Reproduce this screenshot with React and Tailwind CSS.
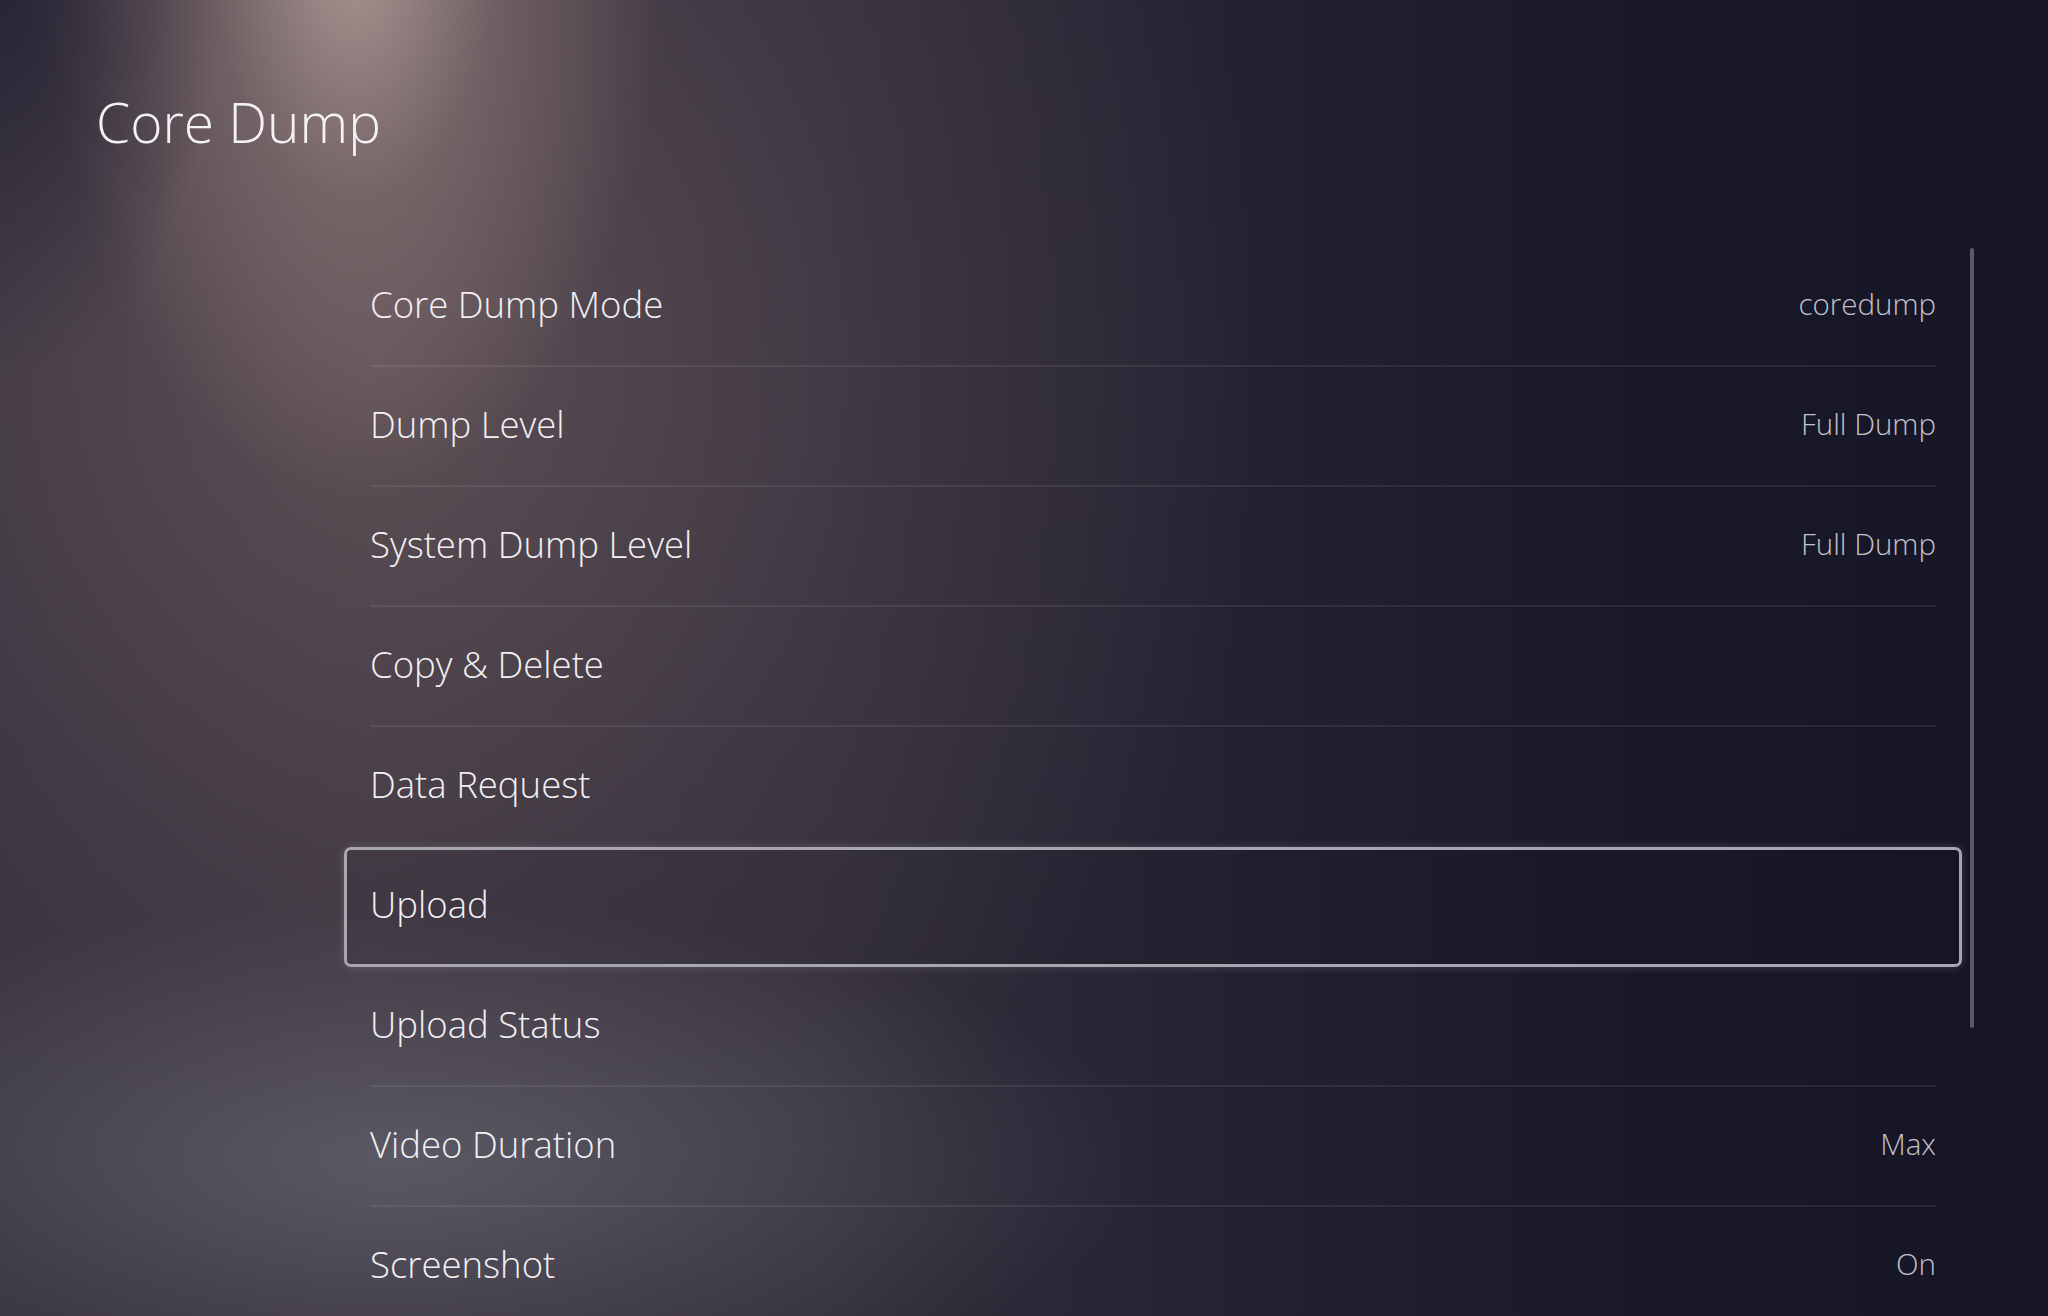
import React from "react";

const rows = [
  { label: "Core Dump Mode", value: "coredump" },
  { label: "Dump Level", value: "Full Dump" },
  { label: "System Dump Level", value: "Full Dump" },
  { label: "Copy & Delete", value: "" },
  { label: "Data Request", value: "" },
  { label: "Upload", value: "", selected: true },
  { label: "Upload Status", value: "" },
  { label: "Video Duration", value: "Max" },
  { label: "Screenshot", value: "On" },
];

function Row({ label, value, selected, nextSelected, last }) {
  const showLine = !selected && !nextSelected && !last;
  return (
    <div
      className={
        selected
          ? "h-[120px] px-[26px] rounded-[7px] ring-[3px] ring-inset ring-[#a7a7b0] shadow-[0_0_8px_rgba(200,200,215,0.22)] bg-[rgba(10,10,25,0.08)]"
          : "h-[120px] px-[26px]"
      }
    >
      <div
        className={
          showLine
            ? "h-full pb-[4px] flex items-center justify-between border-b-2 border-[rgba(255,255,255,0.075)]"
            : "h-full pb-[4px] flex items-center justify-between border-b-2 border-transparent"
        }
      >
        <span className="text-[36.5px] font-light text-[#f2f0f2] leading-none">{label}</span>
        {value ? (
          <span className="text-[29.5px] font-light text-[#c2c0c8] leading-none">{value}</span>
        ) : null}
      </div>
    </div>
  );
}

export default function App() {
  return (
    <div className="w-[2048px] h-[1316px] overflow-hidden font-['Open_Sans','Noto_Sans',sans-serif] bg-[radial-gradient(ellipse_220px_380px_at_0px_0px,rgba(24,24,44,0.6)_0%,rgba(24,24,44,0)_100%),radial-gradient(ellipse_380px_680px_at_355px_-60px,rgba(212,188,180,0.7)_0%,rgba(165,140,135,0.4)_38%,rgba(120,100,100,0)_82%),radial-gradient(ellipse_1000px_1050px_at_380px_360px,rgba(128,108,108,0.5)_0%,rgba(100,85,92,0.25)_50%,rgba(0,0,0,0)_90%),radial-gradient(ellipse_880px_300px_at_400px_1160px,rgba(132,140,152,0.42)_0%,rgba(0,0,0,0)_85%),linear-gradient(90deg,#35303c_0%,#3b343f_18%,#332e3b_40%,#232131_62%,#19192a_80%,#151526_100%)]">
      <div className="pl-[96px] pt-[94px]">
        <h1 className="text-[55px] font-light leading-none text-[#f4f2f4]">Core Dump</h1>
      </div>
      <div className="mt-[98px] flex items-start">
        <div className="ml-[344px] w-[1618px] flex flex-col">
          {rows.map((r, i) => (
            <Row
              key={r.label}
              label={r.label}
              value={r.value}
              selected={r.selected}
              nextSelected={rows[i + 1] && rows[i + 1].selected}
              last={i === rows.length - 1}
            />
          ))}
        </div>
        <div className="ml-[8px] mt-[1px] w-[4px] h-[780px] rounded-full bg-[#5b5b68]" />
      </div>
    </div>
  );
}
